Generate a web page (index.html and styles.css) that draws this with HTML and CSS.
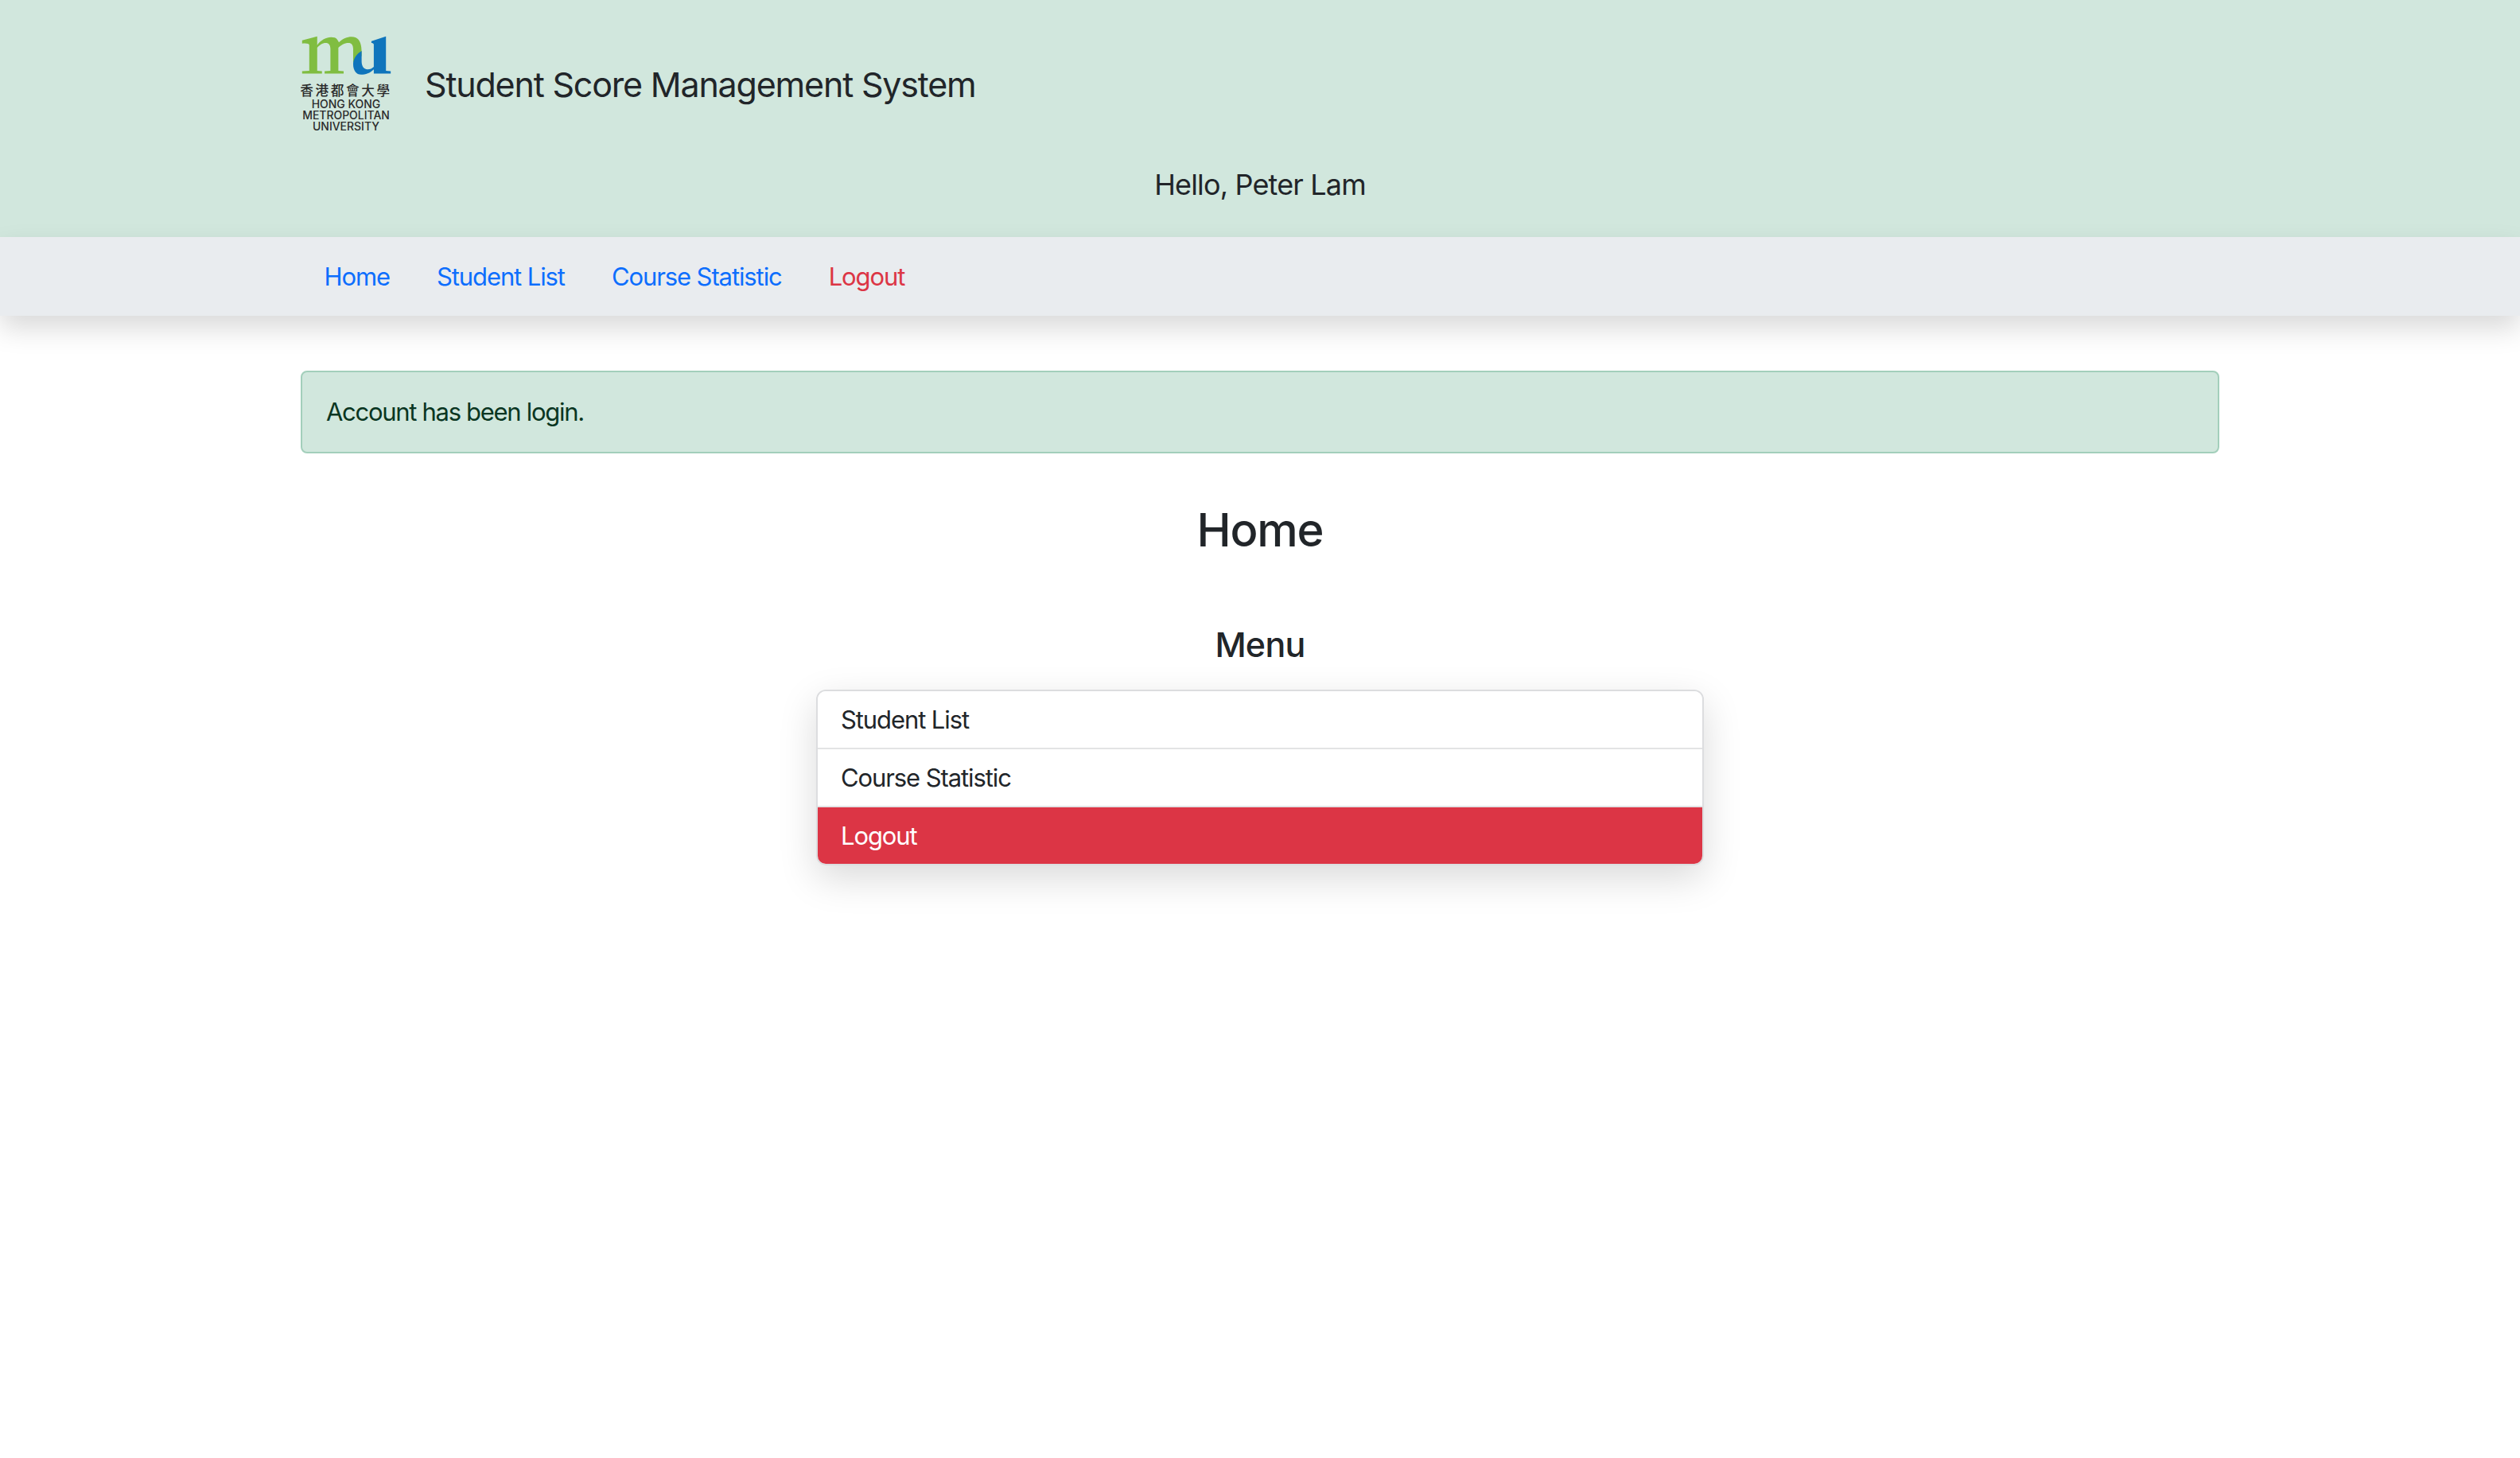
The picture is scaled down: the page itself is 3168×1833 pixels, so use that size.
FILE: index.html
```html
<!DOCTYPE html>
<html>
<head>
  <title>Student Score Management System</title>
  <link rel="stylesheet" href="styles.css">
</head>
<body>

  <header class="site-header">
    <div class="brand">
      <svg class="logo" viewBox="110 70 345 370">
        <path fill="#80bd41" d="M115 90 L172 75 L172 108 C190 84 215 74 238 80 C245 82 250 90 254 98 C272 80 300 72 318 80 C335 88 340 110 340 135 L340 150 C325 155 312 165 308 180 L308 122 C308 108 302 100 290 100 C275 100 262 108 252 118 L252 205 L272 207 L272 216 L200 216 L200 207 L222 205 L222 122 C222 108 216 100 204 100 C192 100 180 108 172 118 L172 205 L190 207 L190 216 L115 216 L115 207 L142 205 L142 108 C142 102 130 100 115 102 Z"/>
        <path fill="#0f75bc" d="M340 130 L340 170 C340 190 350 200 362 200 C372 200 380 196 386 190 L386 106 C386 102 380 100 377 100 L377 93 L432 75 L432 205 L450 207 L450 216 L386 216 L386 200 C372 214 355 220 338 220 C320 220 308 205 308 180 C308 160 322 140 340 130 Z"/>
        <text class="logo-cjk" x="281" y="298">香港都會大學</text>
        <text class="logo-line" x="281" y="346">HONG KONG</text>
        <text class="logo-line" x="281" y="389">METROPOLITAN</text>
        <text class="logo-line" x="281" y="432">UNIVERSITY</text>
      </svg>
      <div class="site-title">Student Score Management System</div>
    </div>
    <div class="greeting">Hello, Peter Lam</div>
  </header>

  <nav class="site-nav">
    <div class="nav-inner">
      <a href="#">Home</a>
      <a href="#">Student List</a>
      <a href="#">Course Statistic</a>
      <a href="#" class="danger">Logout</a>
    </div>
  </nav>

  <main class="content">
    <div class="alert">Account has been login.</div>
    <h1>Home</h1>
    <h2>Menu</h2>
    <div class="menu-list">
      <a href="#">Student List</a>
      <a href="#">Course Statistic</a>
      <a href="#" class="active">Logout</a>
    </div>
  </main>

</body>
</html>
```

FILE: styles.css
```css
body {
  margin: 0;
  font-family: Inter, "Noto Sans CJK TC", sans-serif;
  font-size: 31px;
  letter-spacing: -1.1px;
  line-height: 48px;
  color: #212529;
  background-color: #fff;
}

a {
  text-decoration: none;
}

.site-header {
  background-color: #d1e7dd;
  height: 298px;
  padding-top: 44px;
  box-sizing: border-box;
}

.brand {
  width: 2412px;
  margin: 0 auto;
  display: flex;
  align-items: center;
  gap: 41px;
}

.logo {
  width: 115px;
  height: 123px;
  flex: none;
  letter-spacing: 0;
}

.logo-cjk {
  font-size: 50px;
  letter-spacing: 8px;
  fill: #2b2b2b;
  text-anchor: middle;
  font-weight: 500;
}

.logo-line {
  font-size: 42px;
  font-weight: 500;
  fill: #2b2b2b;
  text-anchor: middle;
}

.site-title {
  font-size: 43px;
  letter-spacing: -1.2px;
  line-height: 60px;
}

.greeting {
  text-align: center;
  font-size: 36px;
  letter-spacing: -0.85px;
  line-height: 56px;
  margin-top: 37px;
}

.site-nav {
  background-color: #e9ecef;
  height: 99px;
  box-shadow: 0 16px 32px rgba(0, 0, 0, 0.15);
}

.nav-inner {
  width: 2412px;
  margin: 0 auto;
  display: flex;
  height: 100%;
  align-items: center;
}

.nav-inner a {
  color: #0d6efd;
  padding: 0 29.5px;
}

.nav-inner a.danger {
  color: #dc3545;
}

.content {
  width: 2412px;
  margin: 0 auto;
  padding: 69px 0 120px;
}

.alert {
  background-color: #d1e7dd;
  border: 2px solid #a3cfbb;
  border-radius: 8px;
  color: #0a3622;
  letter-spacing: -1.3px;
  padding: 26px 30px;
  box-sizing: border-box;
  height: 104px;
}

h1 {
  font-size: 58px;
  letter-spacing: -1.2px;
  line-height: 72px;
  font-weight: 500;
  text-align: center;
  margin: 60px 0 0;
}

h2 {
  font-size: 43px;
  letter-spacing: -0.75px;
  line-height: 56px;
  font-weight: 500;
  text-align: center;
  margin: 80px 0 0;
}

.menu-list {
  width: 1116px;
  margin: 29px auto 0;
  border: 2px solid #dcdddf;
  border-radius: 12px;
  box-sizing: border-box;
  overflow: hidden;
  box-shadow: 0 16px 48px rgba(0, 0, 0, 0.15);
}

.menu-list a {
  display: block;
  color: #212529;
  background-color: #fff;
  padding: 12px 29px;
  height: 73px;
  box-sizing: border-box;
  border-bottom: 2px solid #e3e4e5;
}

.menu-list a.active {
  color: #fff;
  background-color: #dc3545;
  border-bottom: none;
  height: 71px;
}
```
